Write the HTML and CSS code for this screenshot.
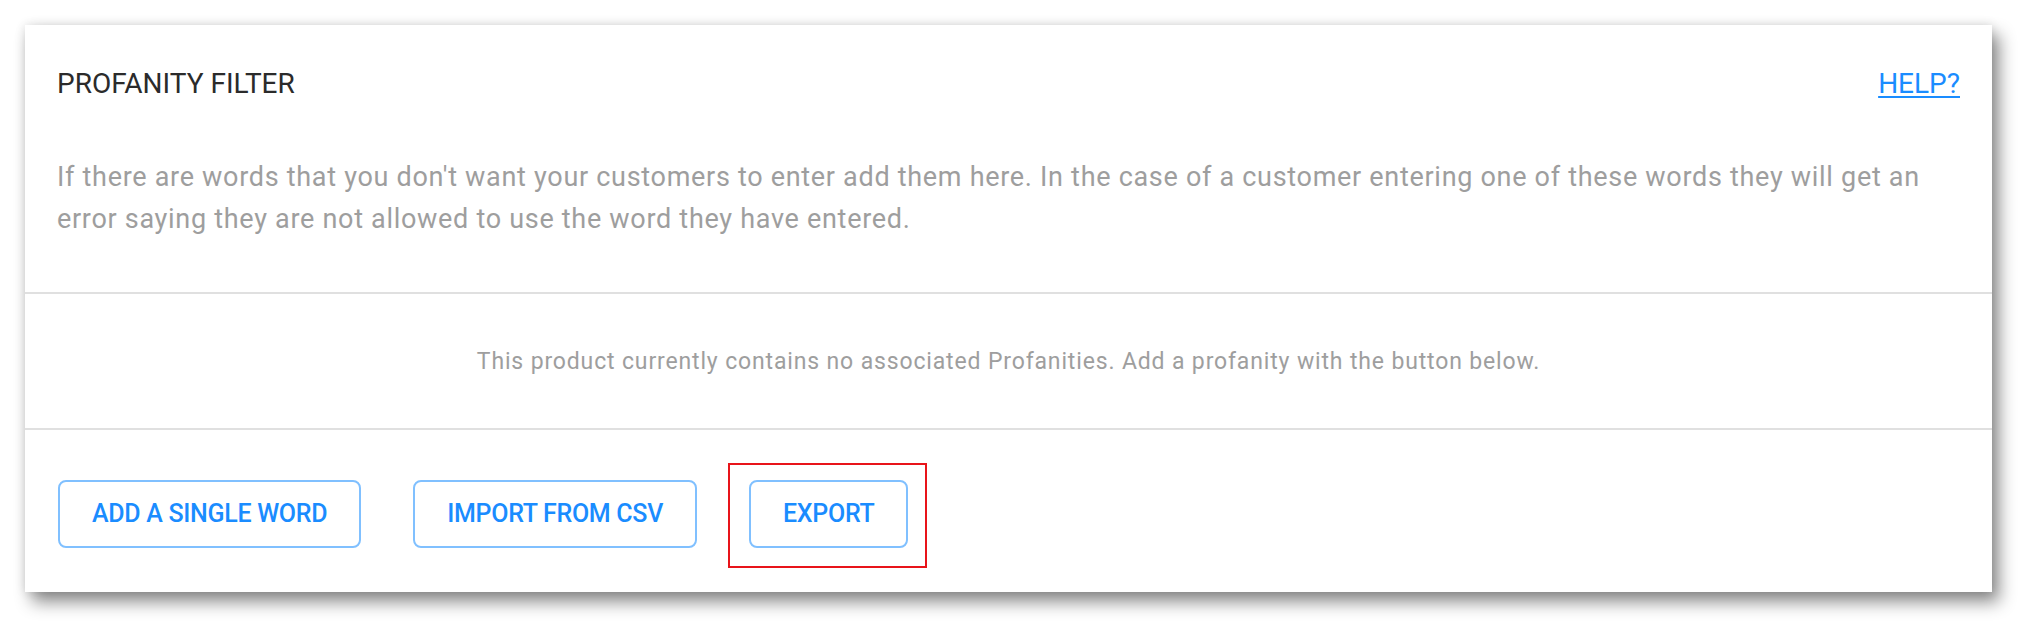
FILE: index.html
```html
<!DOCTYPE html>
<html lang="en">
<head>
    <meta charset="UTF-8">
    <meta name="viewport" content="width=device-width, initial-scale=1.0">
    <title>Profanity Filter</title>
    <link rel="stylesheet" href="styles.css">
</head>
<body>
    <div class="card">
        <div class="card-head">
            <div class="head-row">
                <h2>PROFANITY FILTER</h2>
                <a href="#" class="help">HELP?</a>
            </div>
            <p class="intro">If there are words that you don't want your customers to enter add them here. In the case of a customer entering one of these words they will get an error saying they are not allowed to use the word they have entered.</p>
        </div>

        <div class="empty">This product currently contains no associated Profanities. Add a profanity with the button below.</div>

        <div class="actions">
            <button class="btn">ADD A SINGLE WORD</button>
            <button class="btn">IMPORT FROM CSV</button>
            <span class="marked">
                <button class="btn">EXPORT</button>
            </span>
        </div>
    </div>
</body>
</html>
```

FILE: styles.css
```css
html, body {
    background: #fff;
}

body {
    margin: 0;
    padding: 25px 39px 40px 25px;
    font-family: Roboto, "Liberation Sans", sans-serif;
}

.card {
    position: relative;
    background: #fff;
    height: 567px;
    box-sizing: border-box;
    box-shadow: 7px 10px 16px rgba(0, 0, 0, 0.45), 0 0 10px rgba(0, 0, 0, 0.12);
    display: flex;
    flex-direction: column;
}

.card-head {
    padding: 43px 32px 52px;
    border-bottom: 2px solid #e0e0e0;
}

.head-row {
    display: flex;
    justify-content: space-between;
    align-items: baseline;
}

.head-row h2 {
    margin: 0;
    font-size: 28px;
    line-height: 32px;
    font-weight: 400;
    color: #2b2b2b;
}

.help {
    font-size: 28px;
    line-height: 32px;
    color: #1a8cff;
    text-underline-offset: 3px;
}

.intro {
    margin: 56px 0 0;
    font-size: 27px;
    line-height: 42px;
    letter-spacing: 0.7px;
    color: #9e9e9e;
}

.empty {
    height: 134px;
    display: flex;
    align-items: center;
    justify-content: center;
    font-size: 23px;
    letter-spacing: 0.85px;
    color: #9e9e9e;
    border-bottom: 2px solid #e0e0e0;
}

.actions {
    flex: 1;
    display: flex;
    align-items: flex-start;
    padding: 50px 32px 0 33px;
}

.btn {
    font-family: Roboto, "Liberation Sans", sans-serif;
    font-size: 25px;
    line-height: 30px;
    font-weight: 500;
    letter-spacing: -0.3px;
    color: #1a8cff;
    background: #fff;
    border: 2px solid #80c0ff;
    border-radius: 8px;
    padding: 17px 32px;
    margin-right: 52px;
    cursor: pointer;
}

/* red review marker round the export button */
.marked {
    position: relative;
}
.marked .btn {
    margin-right: 0;
}
.marked::after {
    content: "";
    position: absolute;
    top: -17px;
    bottom: -20px;
    left: -21px;
    right: -19px;
    border: 2px solid #e8141a;
}
```
